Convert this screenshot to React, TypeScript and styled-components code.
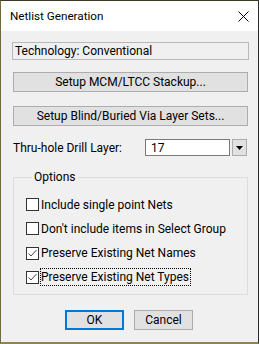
import React from "react";
import styled, { createGlobalStyle } from "styled-components";

const Global = createGlobalStyle`
  html, body { margin: 0; padding: 0; background: #6e6b3c; }
  * { box-sizing: border-box; }
  body { font-family: Roboto, "Segoe UI", "Noto Sans", sans-serif; font-size: 12px; color: #000; }
`;

const Window = styled.div`
  width: 259px;
  height: 344px;
  display: flex;
  flex-direction: column;
  border-top: 1px solid #3c3a24;
  border-left: 1px solid #6e6b3c;
  border-right: 1px solid #2a2a2a;
  border-bottom: 2px solid #8a8650;
  background: #f0f0f0;
  overflow: hidden;
`;

const TitleBar = styled.div`
  height: 30px;
  flex: none;
  background: #ffffff;
  display: flex;
  align-items: center;
  justify-content: space-between;
  padding: 0 9px 0 9px;
`;

const Title = styled.span`
  font-size: 11.7px;
`;

const Body = styled.div`
  flex: 1;
  display: flex;
  flex-direction: column;
  padding: 11px 9px 0 11px;
`;

const ReadOnlyField = styled.div`
  height: 18px;
  border: 1px solid #b9b9b9;
  background: #f0f0f0;
  display: flex;
  align-items: center;
  padding-left: 2px;
  line-height: 1;
`;

const Button = styled.div<{ $mt: number; $width?: number; $default?: boolean }>`
  margin-top: ${(p) => p.$mt}px;
  width: ${(p) => (p.$width ? `${p.$width}px` : "auto")};
  margin-left: ${(p) => (p.$width ? 0 : 1)}px;
  margin-right: ${(p) => (p.$width ? 0 : 1)}px;
  height: 20px;
  background: #e1e1e1;
  border: ${(p) => (p.$default ? "2px solid #0078d7" : "1px solid #adadad")};
  display: flex;
  align-items: center;
  justify-content: center;
  line-height: 1;
`;

const DrillRow = styled.div`
  margin-top: 13px;
  display: flex;
  align-items: center;
  height: 17px;
  padding-left: 1px;
`;

const DrillLabel = styled.span`
  width: 132px;
`;

const Edit = styled.div`
  width: 85px;
  height: 17px;
  background: #fff;
  border: 1px solid #7a7a7a;
  display: flex;
  align-items: center;
  padding-left: 5px;
`;

const DropBtn = styled.div`
  margin-left: 2px;
  width: 15px;
  height: 17px;
  background: #e1e1e1;
  border: 1px solid #adadad;
  display: flex;
  align-items: center;
  justify-content: center;
`;

const Group = styled.fieldset`
  margin: 13px 1px 0 1px;
  padding: 13px 0 0 12px;
  border: 1px solid #dcdcdc;
  height: 126px;
  display: flex;
  flex-direction: column;
  gap: 11.33px;
  min-width: 0;
`;

const Legend = styled.legend`
  padding: 0 2px;
  margin-left: 6px;
  line-height: 16px;
`;

const CheckRow = styled.div`
  display: flex;
  align-items: center;
  height: 13px;
`;

const Box = styled.div`
  width: 13px;
  height: 13px;
  border: 1px solid #333;
  background: #fff;
  flex: none;
  display: flex;
  align-items: center;
  justify-content: center;
`;

const CheckLabel = styled.span<{ $focus?: boolean }>`
  margin-left: 1px;
  padding: 0 1px 0 0;
  white-space: nowrap;
  line-height: 16px;
  border: 1px dotted ${(p) => (p.$focus ? "#000" : "transparent")};
`;

const ButtonRow = styled.div`
  margin-top: 15px;
  display: flex;
  justify-content: center;
  gap: 10px;
  padding-right: 3px;
`;

const Check = () => (
  <svg width="11" height="11" viewBox="0 0 11 11">
    <path d="M1.5 5.5 L4 8 L9.5 2" fill="none" stroke="#444" strokeWidth="1" />
  </svg>
);

const rows = [
  { label: "Include single point Nets", checked: false },
  { label: "Don't include items in Select Group", checked: false },
  { label: "Preserve Existing Net Names", checked: true },
  { label: "Preserve Existing Net Types", checked: true, focus: true },
];

export default function App() {
  return (
    <>
      <Global />
      <Window>
        <TitleBar>
          <Title>Netlist Generation</Title>
          <svg width="11" height="11" viewBox="0 0 11 11">
            <path d="M0.5 0.5 L10.5 10.5 M10.5 0.5 L0.5 10.5" stroke="#000" strokeWidth="1" />
          </svg>
        </TitleBar>
        <Body>
          <ReadOnlyField>Technology: Conventional</ReadOnlyField>
          <Button $mt={12}>Setup MCM/LTCC Stackup...</Button>
          <Button $mt={14}>Setup Blind/Buried Via Layer Sets...</Button>
          <DrillRow>
            <DrillLabel>Thru-hole Drill Layer:</DrillLabel>
            <Edit>17</Edit>
            <DropBtn>
              <svg width="7" height="4" viewBox="0 0 7 4">
                <path d="M0 0 H7 L3.5 4 Z" fill="#000" />
              </svg>
            </DropBtn>
          </DrillRow>
          <Group>
            <Legend>Options</Legend>
            {rows.map((r) => (
              <CheckRow key={r.label}>
                <Box>{r.checked && <Check />}</Box>
                <CheckLabel $focus={r.focus}>{r.label}</CheckLabel>
              </CheckRow>
            ))}
          </Group>
          <ButtonRow>
            <Button $mt={0} $width={59} $default>OK</Button>
            <Button $mt={0} $width={59}>Cancel</Button>
          </ButtonRow>
        </Body>
      </Window>
    </>
  );
}
